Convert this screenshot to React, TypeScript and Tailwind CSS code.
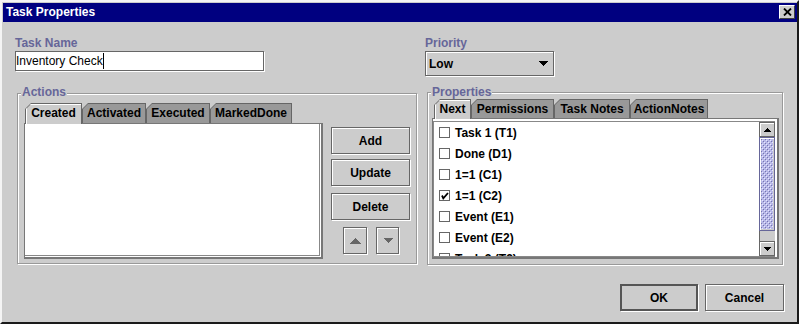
import React from "react";

const flush = "border border-[#666666] bg-[#cccccc] shadow-[1px_1px_0_#ffffff,inset_1px_1px_0_#ffffff]";
const label = "font-bold text-[#666699] leading-[14px]";

const rows: [string, boolean][] = [
  ["Task 1 (T1)", false],
  ["Done (D1)", false],
  ["1=1 (C1)", false],
  ["1=1 (C2)", true],
  ["Event (E1)", false],
  ["Event (E2)", false],
  ["Task 2 (T2)", false],
];

function Tab({ text, w, selected, tall }: { text: string; w: string; selected?: boolean; tall?: boolean }) {
  let h = tall ? "h-[20px]" : "h-[19px]";
  if (selected) h = tall ? "h-[21px] -mb-[1px] relative z-10" : "h-[20px] -mb-[1px] relative z-10";
  return (
    <div className={`${w} ${h} shrink-0 bg-[#666666] px-[1px] pt-[1px] [clip-path:polygon(0_6px,6px_0,100%_0,100%_100%,0_100%)]`}>
      <div
        className={`h-full text-center font-bold text-black [clip-path:polygon(0_5px,5px_0,100%_0,100%_100%,0_100%)] ${tall ? "leading-[19px]" : "leading-[18px]"} ${
          selected ? "bg-[#cccccc] shadow-[inset_1px_1px_0_#ffffff]" : "bg-[#999999]"
        }`}
      >
        {text}
      </div>
    </div>
  );
}

function Button({ text, w }: { text: string; w: string }) {
  return <div className={`${flush} ${w} h-[27px] flex items-center justify-center font-bold`}>{text}</div>;
}

function CheckBox({ checked }: { checked: boolean }) {
  return (
    <div className="w-[11px] h-[11px] shrink-0 border border-[#666666] bg-white shadow-[1px_1px_0_#ffffff]">
      {checked && (
        <svg width="9" height="9" viewBox="0 0 9 9">
          <path d="M2 4.5 L3.3 7.3 L8 2" fill="none" stroke="black" strokeWidth="1.8" />
        </svg>
      )}
    </div>
  );
}

function ScrollArrow({ up }: { up?: boolean }) {
  return (
    <div className="h-[15px] shrink-0 flex items-center justify-center bg-[#cccccc] border border-[#666666] shadow-[inset_1px_1px_0_#ffffff]">
      <svg width="8" height="4" viewBox="0 0 8 4" shapeRendering="crispEdges">
        <path d={up ? "M4 0 L8 4 L0 4 Z" : "M0 0 L8 0 L4 4 Z"} fill="black" />
      </svg>
    </div>
  );
}

export default function App() {
  return (
    <div className="w-[799px] h-[324px] flex flex-col bg-[#cccccc] border-2 border-t-[#f4f4f4] border-l-[#f4f4f4] border-r-[#1a1a1a] border-b-[#1a1a1a] font-['Liberation_Sans',Arial,sans-serif] text-[12px] leading-[14px] text-black overflow-hidden">
      {/* title bar */}
      <div className="ml-[1px] mt-[1px] h-[19px] shrink-0 bg-[#000080] flex justify-between pl-[3px] pr-[2px]">
        <span className="text-white font-bold leading-[19px]">Task Properties</span>
        <div className="mt-[2px] w-[16px] h-[14px] flex items-center justify-center bg-[#cccccc] border border-t-white border-l-white border-r-[#404040] border-b-[#404040]">
          <svg width="9" height="8" viewBox="0 0 9 8">
            <path d="M1 0.5 L8 7.5 M8 0.5 L1 7.5" stroke="black" strokeWidth="1.8" />
          </svg>
        </div>
      </div>

      <div className="flex flex-col pl-[13px] pt-[14px]">
        {/* name + priority */}
        <div className="flex">
          <div className="w-[410px] flex flex-col">
            <span className={label}>Task Name</span>
            <div className="mt-[1px] w-[249px] h-[20px] bg-white border border-[#666666] shadow-[1px_1px_0_#ffffff] flex items-center">
              <span>Inventory Check</span>
              <span className="w-[1px] h-[16px] bg-black" />
            </div>
          </div>
          <div className="flex flex-col">
            <span className={label}>Priority</span>
            <div className={`${flush} mt-[1px] w-[129px] h-[25px] flex items-center justify-between pl-[3px] pr-[5px] font-bold`}>
              <span>Low</span>
              <svg width="9" height="5" viewBox="0 0 9 5" shapeRendering="crispEdges">
                <path d="M0 0 H9 L4.5 5 Z" fill="black" />
              </svg>
            </div>
          </div>
        </div>

        {/* groups */}
        <div className="mt-[16px] ml-[2px] flex items-start gap-[10px]">
          {/* Actions */}
          <div className="relative mt-[1px] w-[400px] h-[171px] border border-[#999999] shadow-[1px_1px_0_#ffffff,inset_1px_1px_0_#ffffff] pl-[6px] pt-[9px] flex items-start">
            <span className={`${label} absolute left-[3px] top-[-9px] px-[1px] bg-[#cccccc]`}>Actions</span>
            <div className="w-[299px] flex flex-col">
              <div className="h-[21px] flex items-end border-b border-[#777777] pl-[1px]">
                <Tab text="Created" w="w-[57px]" selected tall />
                <Tab text="Activated" w="w-[64px]" tall />
                <Tab text="Executed" w="w-[64px]" tall />
                <Tab text="MarkedDone" w="w-[82px]" tall />
              </div>
              <div className="h-[135px] flex bg-white border-l border-r-2 border-b-2 border-[#777777] pr-[1px] pb-[1px]">
                <div className="flex-1 bg-white border-r border-b border-[#888888]" />
              </div>
            </div>
            <div className="ml-[8px] mt-[24px] flex flex-col">
              <Button text="Add" w="w-[79px]" />
              <div className="mt-[5px]">
                <Button text="Update" w="w-[79px]" />
              </div>
              <div className="mt-[7px]">
                <Button text="Delete" w="w-[79px]" />
              </div>
              <div className="mt-[7px] flex pl-[12px]">
                <div className={`${flush} w-[24px] h-[27px] flex items-center justify-center`}>
                  <svg width="11" height="6" viewBox="0 0 11 6" shapeRendering="crispEdges">
                    <path d="M5.5 0 L11 6 L0 6 Z" fill="#666666" />
                  </svg>
                </div>
                <div className={`${flush} ml-[9px] w-[23px] h-[27px] flex items-center justify-center`}>
                  <svg width="10" height="5" viewBox="0 0 10 5" shapeRendering="crispEdges">
                    <path d="M0 0 H10 L5 5 Z" fill="#666666" />
                  </svg>
                </div>
              </div>
            </div>
          </div>

          {/* Properties */}
          <div className="relative w-[356px] h-[173px] border border-[#999999] shadow-[1px_1px_0_#ffffff,inset_1px_1px_0_#ffffff] pl-[4px] pt-[6px]">
            <span className={`${label} absolute left-[3px] top-[-8px] px-[1px] bg-[#cccccc]`}>Properties</span>
            <div className="w-[347px] flex flex-col">
              <div className="h-[20px] flex items-end border-b border-[#777777] pl-[2px]">
                <Tab text="Next" w="w-[37px]" selected />
                <Tab text="Permissions" w="w-[83px]" />
                <Tab text="Task Notes" w="w-[76px]" />
                <Tab text="ActionNotes" w="w-[78px]" />
              </div>
              <div className="h-[140px] bg-white border-l border-r-2 border-b-2 border-[#777777] pt-[2px] pr-[2px]">
                <div className="h-[136px] flex border-l border-t border-b border-[#888888]">
                  <div className="flex-1 flex flex-col overflow-hidden bg-white">
                    {rows.map(([t, c]) => (
                      <div key={t} className="h-[21px] shrink-0 flex items-center pl-[5px] font-bold">
                        <CheckBox checked={c} />
                        <span className="ml-[5px]">{t}</span>
                      </div>
                    ))}
                  </div>
                  <div className="w-[16px] flex flex-col bg-[#cccccc]">
                    <ScrollArrow up />
                    <div className="h-[94px] shrink-0 border border-[#666699] shadow-[inset_1px_1px_0_#ffffff] overflow-hidden">
                      <svg width="14" height="92" className="block">
                        <defs>
                          <pattern id="bumps" width="4" height="4" patternUnits="userSpaceOnUse">
                            <rect width="4" height="4" fill="#b8b8e8" />
                            <rect x="0" y="0" width="1" height="1" fill="#e8e8ff" />
                            <rect x="2" y="2" width="1" height="1" fill="#e8e8ff" />
                            <rect x="1" y="1" width="1" height="1" fill="#7676b0" />
                            <rect x="3" y="3" width="1" height="1" fill="#7676b0" />
                          </pattern>
                        </defs>
                        <rect x="1" y="1" width="12" height="90" fill="url(#bumps)" />
                      </svg>
                    </div>
                    <div className="flex-1 border-l border-[#666666]" />
                    <ScrollArrow />
                  </div>
                </div>
              </div>
            </div>
          </div>
        </div>

        {/* OK / Cancel */}
        <div className="mt-[19px] flex justify-end pr-[13px]">
          <div className="w-[78px] h-[27px] flex items-center justify-center font-bold bg-[#cccccc] border-2 border-[#555555] shadow-[1px_1px_0_#ffffff]">
            OK
          </div>
          <div className="ml-[7px]">
            <Button text="Cancel" w="w-[79px]" />
          </div>
        </div>
      </div>
    </div>
  );
}
